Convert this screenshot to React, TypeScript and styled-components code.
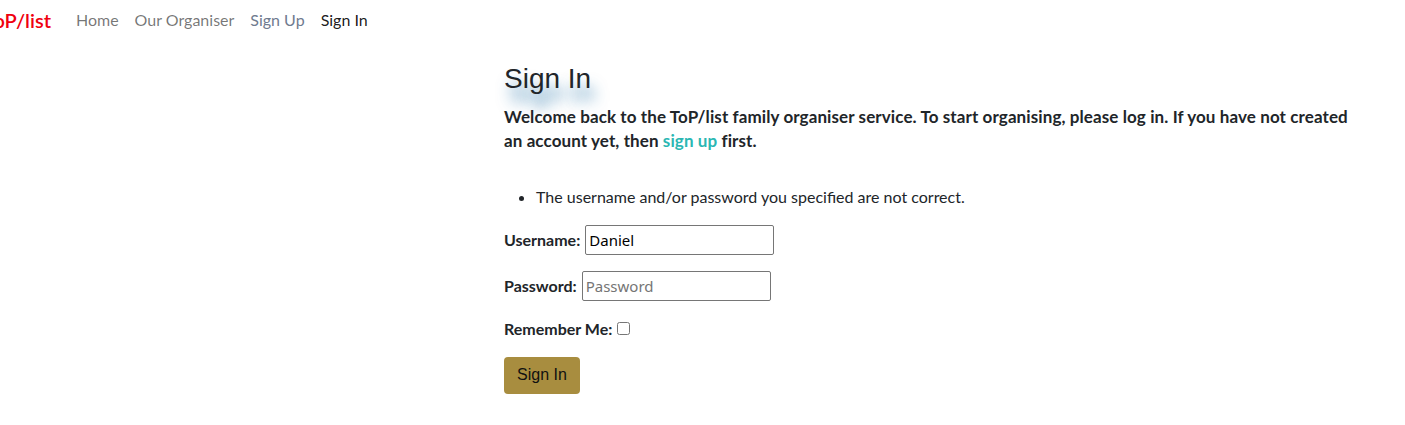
import styled, {createGlobalStyle} from 'styled-components'

const GlobalStyle = createGlobalStyle`
  body {
    margin: 0;
    background: #fff;
    color: #212529;
    font-family: Lato, 'Liberation Sans', sans-serif;
    font-size: 16px;
    line-height: 1.5;
  }
`

const links = [
  {label: 'Home', tone: 'muted'},
  {label: 'Our Organiser', tone: 'muted'},
  {label: 'Sign Up', tone: 'visited'},
  {label: 'Sign In', tone: 'active'},
]

export default function App() {
  return (
    <>
      <GlobalStyle />
      <Navbar>
        <Brand>ToP/list</Brand>
        <NavList>
          {links.map(l => (
            <NavLink key={l.label} $tone={l.tone}>
              {l.label}
            </NavLink>
          ))}
        </NavList>
      </Navbar>
      <Main>
        <Content>
          <Heading>Sign In</Heading>
          <Intro>
            Welcome back to the ToP/list family organiser service. To start
            organising, please log in. If you have not created an account yet,
            then <TealLink>sign up</TealLink> first.
          </Intro>
          <Errors>
            <li>The username and/or password you specified are not correct.</li>
          </Errors>
          <Form>
            <Field>
              <Label>Username:</Label>
              <Input defaultValue="Daniel" />
            </Field>
            <Field>
              <Label>Password:</Label>
              <Input type="password" placeholder="Password" />
            </Field>
            <Field>
              <Label>Remember Me:</Label>
              <Check type="checkbox" />
            </Field>
            <SubmitButton type="button">Sign In</SubmitButton>
          </Form>
        </Content>
      </Main>
    </>
  )
}

const Navbar = styled.nav`
  display: flex;
  align-items: center;
  height: 40px;
  overflow: hidden;
`
const Brand = styled.span`
  margin-left: -16px;
  margin-right: 17px;
  color: #f0000f;
  font-size: 20px;
  font-weight: 600;
  white-space: nowrap;
`
const NavList = styled.div`
  display: flex;
`
const NavLink = styled.a<{$tone: string}>`
  padding: 0 8px;
  font-size: 16px;
  color: ${p =>
    p.$tone === 'active'
      ? 'rgba(0,0,0,0.9)'
      : p.$tone === 'visited'
        ? '#6f7b8f'
        : 'rgba(0,0,0,0.55)'};
  cursor: pointer;
`
const Main = styled.main`
  display: flex;
  padding-left: 504px;
`
const Content = styled.div`
  width: 856px;
  padding-top: 22px;
`
const Heading = styled.h1`
  margin: 0 0 9px;
  font-family: 'Liberation Sans', Arial, sans-serif;
  font-size: 28px;
  font-weight: 400;
  line-height: 1.2;
  text-shadow: 4px 14px 14px rgba(25, 110, 165, 0.75);
`
const Intro = styled.p`
  margin: 0 0 32px;
  font-size: 17px;
  letter-spacing: 0.1px;
  font-weight: 700;
  line-height: 24px;
`
const TealLink = styled.a`
  color: #2bb7b3;
  cursor: pointer;
`
const Errors = styled.ul`
  margin: 0 0 16px;
  padding-left: 32px;
`
const Form = styled.form`
  display: flex;
  flex-direction: column;
  align-items: flex-start;
`
const Field = styled.div`
  display: flex;
  align-items: center;
  gap: 5px;
  margin-bottom: 16px;
`
const Label = styled.label`
  font-weight: 700;
`
const Input = styled.input`
  box-sizing: border-box;
  width: 189px;
  height: 30px;
  padding: 0 3px;
  border: 1px solid #767676;
  border-radius: 2px;
  font-family: 'Noto Sans', 'Open Sans', sans-serif;
  font-size: 15px;
  color: #000;
  &::placeholder {
    color: #757575;
  }
`
const Check = styled.input`
  width: 13px;
  height: 13px;
  margin: 0;
`
const SubmitButton = styled.button`
  width: 76px;
  height: 37px;
  border: none;
  border-radius: 4px;
  background: #a88d3f;
  color: #111;
  font-family: 'Liberation Sans', Arial, sans-serif;
  font-size: 16px;
  cursor: pointer;
`
